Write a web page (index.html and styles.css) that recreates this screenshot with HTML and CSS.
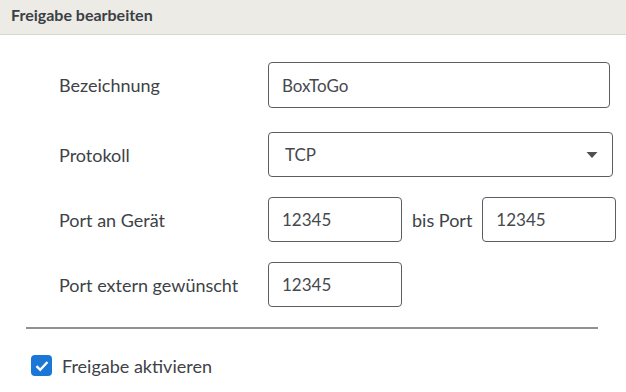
FILE: index.html
```html
<!DOCTYPE html>
<html lang="de">
  <head>
    <meta charset="UTF-8" />
    <meta name="viewport" content="width=device-width, initial-scale=1.0" />
    <title>Freigabe bearbeiten</title>
    <link rel="stylesheet" href="styles.css">
  </head>
  <body>
    <div class="dialog-header">
      <h1>Freigabe bearbeiten</h1>
    </div>
    <form class="share-form">
      <div class="form-row row-name">
        <label for="name">Bezeichnung</label>
        <input id="name" class="text-input wide" type="text" value="BoxToGo" />
      </div>
      <div class="form-row">
        <label for="proto">Protokoll</label>
        <div class="select-box">
          <span>TCP</span>
          <svg width="12" height="8" viewBox="0 0 12 8"><path d="M0.5 1 L11.5 1 L6 7 Z" fill="#4b5056" /></svg>
        </div>
      </div>
      <div class="form-row">
        <label for="port-from">Port an Gerät</label>
        <div class="port-range">
          <input id="port-from" class="text-input port" type="text" value="12345" />
          <span class="bis">bis Port</span>
          <input class="text-input port" type="text" value="12345" />
        </div>
      </div>
      <div class="form-row">
        <label for="port-ext">Port extern gewünscht</label>
        <input id="port-ext" class="text-input port" type="text" value="12345" />
      </div>
      <hr class="divider" />
      <label class="check-row">
        <span class="checkbox">
          <svg width="14" height="12" viewBox="0 0 14 12"><path d="M1.5 6.2 L5.2 9.8 L12.5 2" fill="none" stroke="#fff" stroke-width="2.4" /></svg>
        </span>
        Freigabe aktivieren
      </label>
    </form>
  </body>
</html>
```

FILE: styles.css
```css
body {
  margin: 0;
  font-family: Lato, "Open Sans", sans-serif;
  font-size: 18px;
  color: #3e4247;
  background: #fff;
}

.dialog-header {
  background-color: #ecebe6;
  border-bottom: 1px solid #d6d6d2;
  height: 34px;
  padding: 0 11px;
}

.dialog-header h1 {
  margin: 0;
  font-size: 16px;
  font-weight: bold;
  line-height: 30px;
  color: #3b4045;
}

.share-form {
  padding: 27px 0 0 0;
}

.form-row {
  display: grid;
  grid-template-columns: 209px auto;
  align-items: center;
  padding-left: 59px;
  margin-bottom: 20px;
}

.form-row.row-name {
  margin-bottom: 24px;
}

.form-row label {
  color: #3e4247;
}

.text-input {
  box-sizing: border-box;
  height: 45px;
  border: 1px solid #5a5e63;
  border-radius: 4px;
  padding: 0 13px;
  font-family: inherit;
  font-size: 17px;
  color: #45494e;
  background: #fff;
}

.text-input.wide {
  width: 342px;
  height: 46px;
}

.text-input.port {
  width: 134px;
}

.select-box {
  box-sizing: border-box;
  width: 345px;
  height: 45px;
  border: 1px solid #5a5e63;
  border-radius: 4px;
  padding: 0 14px 0 16px;
  display: flex;
  align-items: center;
  justify-content: space-between;
  font-size: 17px;
  color: #45494e;
}

.port-range {
  display: flex;
  align-items: center;
}

.bis {
  margin: 0 10px 0 10px;
}

.divider {
  margin: 0 28px 0 26px;
  border: none;
  border-top: 2px solid #8f9194;
}

.check-row {
  display: flex;
  align-items: center;
  gap: 10px;
  height: 21px;
  padding: 26px 0 0 31px;
  color: #3e4247;
}

.checkbox {
  width: 21px;
  height: 21px;
  border-radius: 4px;
  background: #1a77d6;
  display: flex;
  align-items: center;
  justify-content: center;
}
```
